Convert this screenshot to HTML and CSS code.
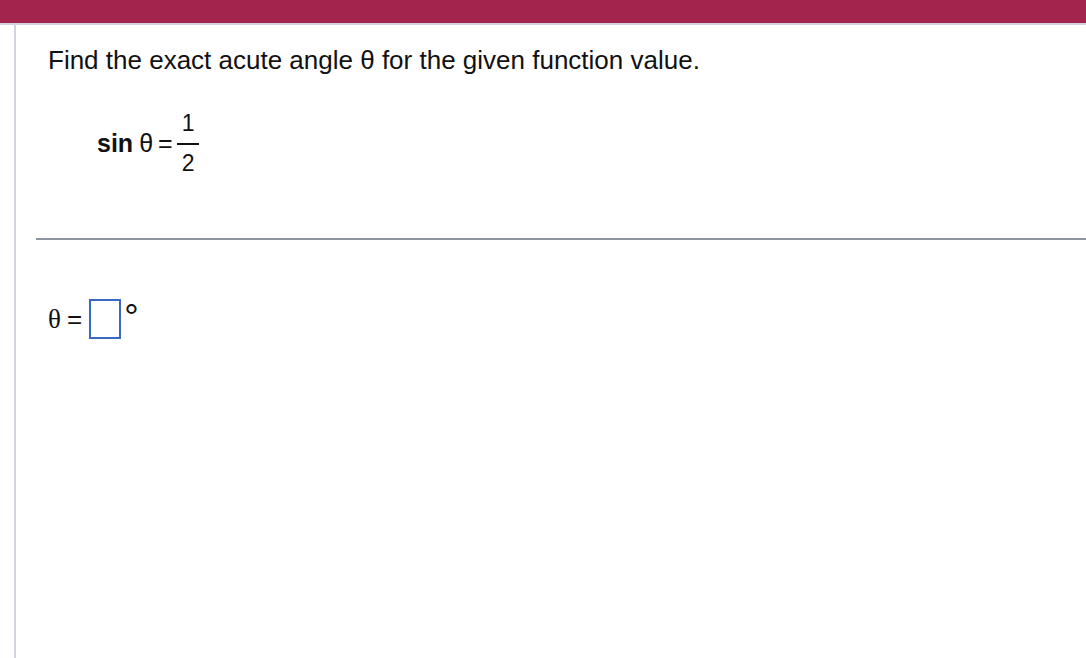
FILE: index.html
```html
<!DOCTYPE html>
<html>
<head>
<meta charset="utf-8">
<link rel="stylesheet" href="styles.css">
</head>
<body>
<div class="topbar"></div>
<div class="page">
  <div class="content">
    <p class="question">Find the exact acute angle &#952; for the given function value.</p>
    <div class="equation">
      <span class="fn">sin</span><span class="theta">&#952;</span><span class="eq">=</span>
      <span class="frac"><span class="num">1</span><span class="den">2</span></span>
    </div>
    <hr class="rule">
    <div class="answer">
      <span class="atheta">&#952;</span><span class="aeq">=</span><span class="box"></span><span class="deg">&#176;</span>
    </div>
  </div>
</div>
</body>
</html>
```
FILE: styles.css
```css
html, body {
  margin: 0;
  padding: 0;
  background: #ffffff;
  font-family: "Liberation Sans", Arial, sans-serif;
  color: #111111;
}
.topbar {
  height: 23px;
  background: #a3254e;
  border-bottom: 2px solid #d2d3df;
}
.page {
  margin-left: 14px;
  border-left: 2px solid #d3d4e0;
  min-height: 633px;
}
.content {
  padding-top: 21px;
}
.question {
  margin: 0 0 0 32px;
  font-size: 26px;
  line-height: 28px;
}
.equation {
  display: flex;
  align-items: center;
  margin: 38px 0 0 81px;
  font-size: 25px;
}
.fn {
  font-weight: bold;
  font-size: 25px;
  margin-right: 6px;
}
.theta {
  margin-right: 5px;
}
.eq {
  margin-right: 4px;
}
.frac {
  display: inline-flex;
  flex-direction: column;
  align-items: center;
  font-size: 23px;
  line-height: 22px;
}
.num {
  padding: 0 5px 9px;
  border-bottom: 2px solid #111;
}
.den {
  padding: 7px 5px 0;
}
.rule {
  margin: 64px 0 0 20px;
  border: 0;
  height: 2px;
  background: #8d95a3;
}
.answer {
  display: flex;
  align-items: flex-end;
  margin: 59px 0 0 32px;
}
.atheta {
  font-family: "Liberation Serif", "Times New Roman", serif;
  font-size: 27px;
  line-height: 28px;
  margin-right: 6px;
  margin-bottom: 6px;
}
.aeq {
  font-size: 26px;
  line-height: 28px;
  margin-right: 7px;
  margin-bottom: 6px;
}
.box {
  width: 28px;
  height: 36px;
  border: 2px solid #3b67c6;
}
.deg {
  font-size: 36px;
  line-height: 36px;
  align-self: flex-start;
  margin-left: 3px;
  margin-top: 1px;
}
```
